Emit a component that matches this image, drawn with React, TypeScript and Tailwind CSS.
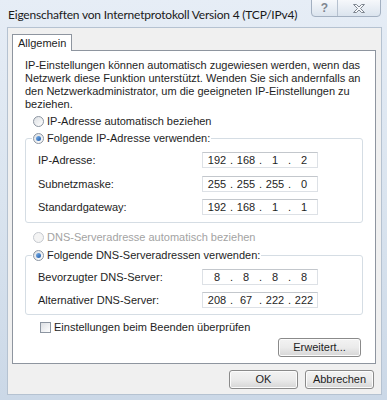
import React from 'react';

function Radio({ checked, disabled }: { checked?: boolean; disabled?: boolean }) {
  return (
    <span
      className={`flex items-center justify-center w-[11px] h-[11px] rounded-full border shrink-0 ${
        disabled ? 'border-[#c5c9cf] bg-[#f4f4f4]' : 'border-[#8c95a1] bg-gradient-to-br from-[#dcdfe3] to-white'
      }`}
    >
      {checked && <span className="w-[5px] h-[5px] rounded-full bg-gradient-to-br from-[#7fb5ec] to-[#1a58a8]" />}
    </span>
  );
}

function IpField({ parts }: { parts: string[] }) {
  return (
    <div className="flex items-center w-[116px] h-[16px] pl-[1px] bg-white border border-[#dde1e6] border-t-[#c3c7cc] text-[11px] leading-[14px]">
      {parts.map((p, i) => (
        <React.Fragment key={i}>
          <span className="w-[26px] text-center">{p}</span>
          {i < 3 && <span className="w-[3px] text-center">.</span>}
        </React.Fragment>
      ))}
    </div>
  );
}

function Btn({ label, w }: { label: string; w: string }) {
  return (
    <div
      className={`${w} h-[19px] flex items-center justify-center rounded-[3px] border border-[#8a8a8a] bg-gradient-to-b from-[#f3f3f3] via-[#ebebeb] to-[#d6d6d6] text-[11px] text-[#1e1e1e] shadow-[inset_0_0_0_1px_#fcfcfc]`}
    >
      {label}
    </div>
  );
}

export default function App() {
  return (
    <div className="relative w-[387px] h-[400px] overflow-hidden flex flex-col bg-gradient-to-b from-[#e6edf6] via-[#dae4ef] to-[#cbd8e7] font-['Liberation_Sans',Arial,sans-serif] text-[#1e1e1e]">
      {/* title bar */}
      <div className="h-[27px] shrink-0 pl-[8px] pt-[7px] text-[12px] leading-[16px] tracking-[-0.2px] text-[#1a1a1a] font-['Lato',sans-serif]">
        Eigenschaften von Internetprotokoll Version 4 (TCP/IPv4)
      </div>
      <div className="absolute top-[-1px] left-[311px] w-[70px] flex h-[18px] rounded-b-[4px] border border-[#a3b0c1] bg-gradient-to-b from-[#f6f8fb] to-[#dbe4ee] overflow-hidden">
        <div className="w-[26px] shrink-0 flex items-center justify-center border-r border-[#b6c1cf] text-[12px] font-bold text-[#7f8690]">?</div>
        <div className="flex-1 flex items-center justify-center">
          <svg width="14" height="11" viewBox="0 0 14 11">
            <path
              d="M1.5 1.5h3l2.5 2.5 2.5-2.5h3L8.5 5.5l4 4h-3L7 7l-2.5 2.5h-3l4-4z"
              fill="#f5f7fa"
              stroke="#7f8690"
              strokeWidth="1"
              strokeLinejoin="round"
            />
          </svg>
        </div>
      </div>

      {/* client area */}
      <div className="flex-1 ml-[7px] mr-[5px] mb-[5px] bg-[#f0f0f0] flex flex-col pt-[6px] border border-[#b5c2d1]">
        <div className="flex ml-[4px]">
          <div className="relative z-10 h-[17px] -mb-[1px] px-[5px] flex items-center bg-white border border-[#8e959f] border-b-0 text-[11px]">
            Allgemein
          </div>
        </div>
        <div className="ml-[4px] mr-[5px] h-[314px] bg-white border border-[#8e959f] flex flex-col text-[11px]">
          <p className="ml-[12px] mt-[8px] leading-[13px] w-[340px]">
            IP-Einstellungen können automatisch zugewiesen werden, wenn das Netzwerk diese Funktion unterstützt. Wenden Sie sich andernfalls an den Netzwerkadministrator, um die geeigneten IP-Einstellungen zu beziehen.
          </p>

          <div className="flex items-center gap-[3px] h-[14px] mt-[3px] ml-[20px]">
            <Radio />
            <span>IP-Adresse automatisch beziehen</span>
          </div>

          <fieldset className="ml-[12px] w-[338px] mt-[3px] border border-[#d5dde4] rounded-[3px] pb-[6px]">
            <legend className="ml-[6px] px-[1px] h-[14px] flex items-center gap-[3px]">
              <Radio checked />
              <span>Folgende IP-Adresse verwenden:</span>
            </legend>
            <div className="flex flex-col gap-[7px] pt-[7px] pl-[12px]">
              {[
                ['IP-Adresse:', ['192', '168', '1', '2']],
                ['Subnetzmaske:', ['255', '255', '255', '0']],
                ['Standardgateway:', ['192', '168', '1', '1']],
              ].map(([label, parts]) => (
                <div key={label as string} className="flex items-center">
                  <span className="w-[164px]">{label as string}</span>
                  <IpField parts={parts as string[]} />
                </div>
              ))}
            </div>
          </fieldset>

          <div className="flex items-center gap-[3px] h-[14px] mt-[8px] ml-[20px] text-[#a3a3a3]">
            <Radio disabled />
            <span>DNS-Serveradresse automatisch beziehen</span>
          </div>

          <fieldset className="ml-[12px] w-[338px] mt-[4px] border border-[#d5dde4] rounded-[3px] pb-[5px]">
            <legend className="ml-[6px] px-[1px] h-[14px] flex items-center gap-[3px]">
              <Radio checked />
              <span>Folgende DNS-Serveradressen verwenden:</span>
            </legend>
            <div className="flex flex-col gap-[7px] pt-[6px] pl-[12px]">
              {[
                ['Bevorzugter DNS-Server:', ['8', '8', '8', '8']],
                ['Alternativer DNS-Server:', ['208', '67', '222', '222']],
              ].map(([label, parts]) => (
                <div key={label as string} className="flex items-center">
                  <span className="w-[164px]">{label as string}</span>
                  <IpField parts={parts as string[]} />
                </div>
              ))}
            </div>
          </fieldset>

          <div className="flex items-center gap-[3px] h-[14px] mt-[6px] ml-[27px]">
            <span className="w-[11px] h-[11px] border border-[#8c95a1] bg-gradient-to-br from-[#dcdfe3] to-white shrink-0" />
            <span>Einstellungen beim Beenden überprüfen</span>
          </div>

          <div className="flex justify-end mt-[3px] mr-[14px]">
            <Btn label="Erweitert..." w="w-[83px]" />
          </div>
        </div>

        <div className="flex justify-end gap-[7px] mt-[6px] mr-[7px]">
          <Btn label="OK" w="w-[69px]" />
          <Btn label="Abbrechen" w="w-[69px]" />
        </div>
      </div>
    </div>
  );
}
